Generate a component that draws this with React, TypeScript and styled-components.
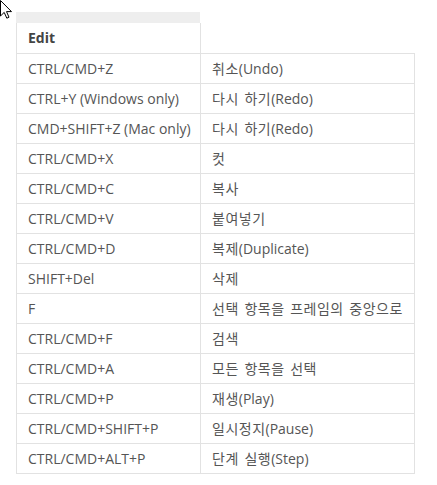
import React from 'react';
import styled, { createGlobalStyle } from 'styled-components';

const GlobalStyle = createGlobalStyle`
  body {
    margin: 0;
    background: #ffffff;
    font-family: 'Open Sans', 'Noto Sans CJK KR', sans-serif;
  }
`;

const Page = styled.div`
  position: relative;
  width: 437px;
  height: 485px;
  padding: 12px 0 0 16px;
  box-sizing: border-box;
`;

const Cursor = styled.svg`
  position: absolute;
  left: 0;
  top: 0;
`;

const TopBar = styled.div`
  width: 184px;
  height: 11px;
  background: #eeeeee;
`;

const Table = styled.table`
  border-collapse: collapse;
  table-layout: fixed;
  width: 399px;
  font-size: 14px;
  color: #555555;
`;

const Col = styled.col<{ $wide?: boolean }>`
  width: ${(p) => (p.$wide ? '214px' : '184px')};
`;

const HeadCell = styled.th<{ $bare?: boolean }>`
  height: 30px;
  box-sizing: border-box;
  padding: 0 11px;
  text-align: left;
  font-weight: 700;
  color: #444444;
  border: 1px solid #e2e2e2;
  border-top: none;
  ${(p) => (p.$bare ? 'border-right: none;' : '')}
`;

const Cell = styled.td`
  height: 30px;
  box-sizing: border-box;
  padding: 0 6px 0 11px;
  border: 1px solid #e2e2e2;
  white-space: nowrap;
`;

const Hangul = styled.span`
  font-family: 'Noto Sans CJK KR', sans-serif;
  letter-spacing: 0.5px;
  word-spacing: 2px;
`;

const rows: [string, string][] = [
  ['CTRL/CMD+Z', '취소(Undo)'],
  ['CTRL+Y (Windows only)', '다시 하기(Redo)'],
  ['CMD+SHIFT+Z (Mac only)', '다시 하기(Redo)'],
  ['CTRL/CMD+X', '컷'],
  ['CTRL/CMD+C', '복사'],
  ['CTRL/CMD+V', '붙여넣기'],
  ['CTRL/CMD+D', '복제(Duplicate)'],
  ['SHIFT+Del', '삭제'],
  ['F', '선택 항목을 프레임의 중앙으로'],
  ['CTRL/CMD+F', '검색'],
  ['CTRL/CMD+A', '모든 항목을 선택'],
  ['CTRL/CMD+P', '재생(Play)'],
  ['CTRL/CMD+SHIFT+P', '일시정지(Pause)'],
  ['CTRL/CMD+ALT+P', '단계 실행(Step)'],
];

// split into Hangul runs and latin runs so each gets its own font metrics
const Action: React.FC<{ text: string }> = ({ text }) => {
  const parts = text.match(/[\uAC00-\uD7A3 ]+|[^\uAC00-\uD7A3 ]+/g) || [];
  return (
    <>
      {parts.map((part, i) =>
        /[\uAC00-\uD7A3]/.test(part) ? <Hangul key={i}>{part}</Hangul> : <span key={i}>{part}</span>
      )}
    </>
  );
};

const App: React.FC = () => {
  return (
    <Page>
      <GlobalStyle />
      <TopBar />
      <Table>
        <colgroup>
          <Col />
          <Col $wide />
        </colgroup>
        <thead>
          <tr>
            <HeadCell>Edit</HeadCell>
            <HeadCell $bare />
          </tr>
        </thead>
        <tbody>
          {rows.map(([keys, action]) => (
            <tr key={keys}>
              <Cell>{keys}</Cell>
              <Cell>
                <Action text={action} />
              </Cell>
            </tr>
          ))}
        </tbody>
      </Table>
      <Cursor width="14" height="20" viewBox="0 0 14 20">
        <path
          d="M0.5 0.5 L0.5 16 L4.2 12.4 L6.8 18.2 L9 17.2 L6.5 11.6 L11.5 11.6 Z"
          fill="#ffffff"
          stroke="#000000"
          strokeWidth="1"
          strokeLinejoin="miter"
        />
      </Cursor>
    </Page>
  );
};

export default App;
